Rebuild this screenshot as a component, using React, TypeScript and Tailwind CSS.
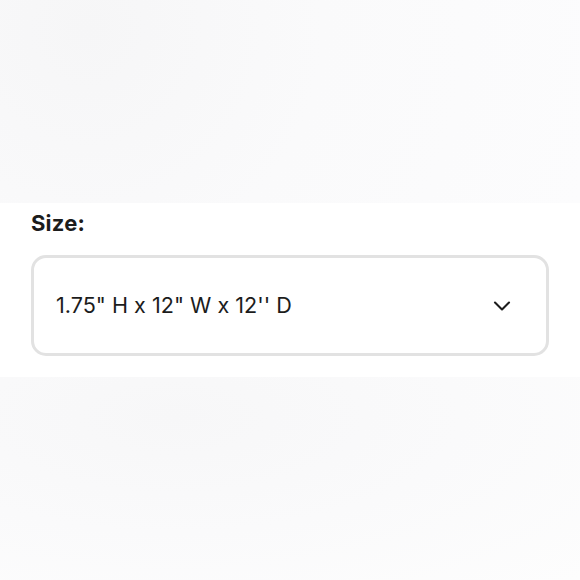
import { ChevronDown } from 'lucide-react';

const App = () => {
  return (
    <div className="w-[580px] h-[580px] flex flex-col bg-white font-['Inter',sans-serif] text-[#1c1c1c]">
      <div className="h-[203px] bg-[radial-gradient(circle_at_15%_15%,#f6f6f7,#fafafb_45%,#fcfcfd)]" />

      <section className="h-[174px] bg-white px-[31px] pt-[5px]">
        <label className="block text-[22px] leading-[30px] font-bold tracking-[0.2px]">Size:</label>
        <div className="mt-[17px] h-[101px] w-[518px] rounded-[15px] border-[3px] border-[#e2e2e2] flex items-center justify-between pl-[22px] pr-[30px]">
          <span className="text-[21.6px] leading-none">1.75" H x 12" W x 12'' D</span>
          <ChevronDown className="w-[28px] h-[28px] text-[#1c1c1c]" strokeWidth={1.8} />
        </div>
      </section>

      <div className="flex-1 bg-[radial-gradient(ellipse_at_30%_20%,#f7f7f8,#fafafb_50%,#fdfdfd)]" />
    </div>
  );
};

export default App;
